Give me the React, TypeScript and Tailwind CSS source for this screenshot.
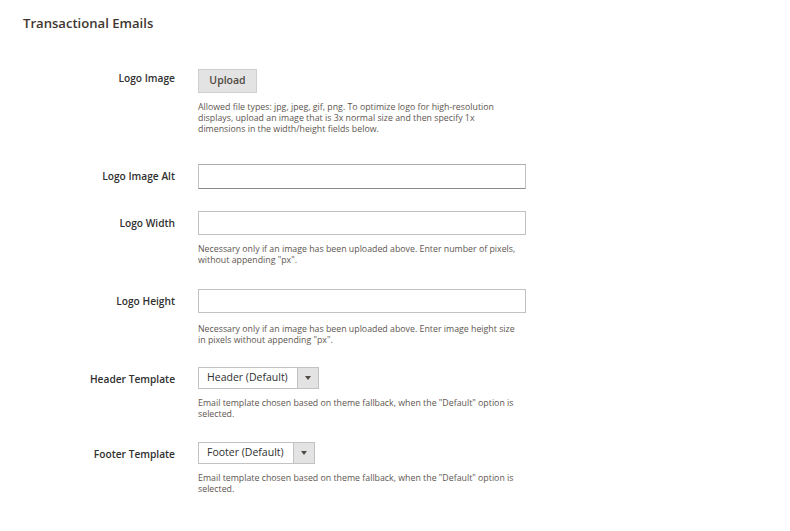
import type { ReactNode } from 'react'

function Row({ label, top, children }: { label: string; top: string; children: ReactNode }) {
  return (
    <div className={`flex ${top}`}>
      <div className="w-[176px] shrink-0 pr-[1px] text-right text-[10.2px] font-semibold text-[#303030] leading-[24px]">
        {label}
      </div>
      <div className="ml-[22px] w-[328px]">{children}</div>
    </div>
  )
}

function Help({ children, mt = 'mt-[9px]' }: { children: ReactNode; mt?: string }) {
  return <p className={`${mt} text-[8.8px] leading-[11px] text-[#5e5650]`}>{children}</p>
}

function TextInput({ dark = false, h = 'h-[24px]' }: { dark?: boolean; h?: string }) {
  return (
    <input
      type="text"
      className={`block w-[328px] ${h} border border-[#c2c2c2] bg-white outline-none ${dark ? 'border-b-[#8a8a8a] border-t-[#adadad]' : ''}`}
    />
  )
}

function Select({ value, w, textW }: { value: string; w: string; textW: string }) {
  return (
    <div className={`flex h-[22px] ${w} border border-[#c2c2c2] bg-white text-[10.5px] text-[#303030]`}>
      <div className={`${textW} flex items-center pl-[8px]`}>{value}</div>
      <div className="flex flex-1 items-center justify-center border-l border-[#c2c2c2] bg-[#e3e3e3]">
        <svg width="6" height="4" viewBox="0 0 6 4">
          <path d="M0 0h6L3 4z" fill="#514943" />
        </svg>
      </div>
    </div>
  )
}

export default function App() {
  return (
    <div className="w-[790px] h-[531px] bg-white overflow-hidden" style={{ fontFamily: '"Open Sans", "Noto Sans", sans-serif' }}>
      <h1 className="pl-[23px] pt-[14px] text-[13.1px] font-semibold leading-[18px] text-[#41362f]">Transactional Emails</h1>

      <Row label="Logo Image" top="mt-[34px]">
        <button
          type="button"
          className="h-[24px] w-[59px] border border-[#cfcfcf] bg-[#e3e3e3] text-[10.5px] font-semibold text-[#514943]"
        >
          Upload
        </button>
        <Help>
          Allowed file types: jpg, jpeg, gif, png. To optimize logo for high-resolution
          <br />
          displays, upload an image that is 3x normal size and then specify 1x
          <br />
          dimensions in the width/height fields below.
        </Help>
      </Row>

      <Row label="Logo Image Alt" top="mt-[29px]">
        <TextInput dark h="h-[25px]" />
      </Row>

      <Row label="Logo Width" top="mt-[22px]">
        <TextInput />
        <Help mt="mt-[9px]">
          Necessary only if an image has been uploaded above. Enter number of pixels,
          <br />
          without appending "px".
        </Help>
      </Row>

      <Row label="Logo Height" top="mt-[23px]">
        <TextInput />
        <Help mt="mt-[11px]">
          Necessary only if an image has been uploaded above. Enter image height size
          <br />
          in pixels without appending "px".
        </Help>
      </Row>

      <Row label="Header Template" top="mt-[21px]">
        <Select value="Header (Default)" w="w-[121px]" textW="w-[98px]" />
        <Help mt="mt-[9px]">
          Email template chosen based on theme fallback, when the "Default" option is
          <br />
          selected.
        </Help>
      </Row>

      <Row label="Footer Template" top="mt-[22px]">
        <Select value="Footer (Default)" w="w-[117px]" textW="w-[94px]" />
        <Help mt="mt-[9px]">
          Email template chosen based on theme fallback, when the "Default" option is
          <br />
          selected.
        </Help>
      </Row>
    </div>
  )
}
